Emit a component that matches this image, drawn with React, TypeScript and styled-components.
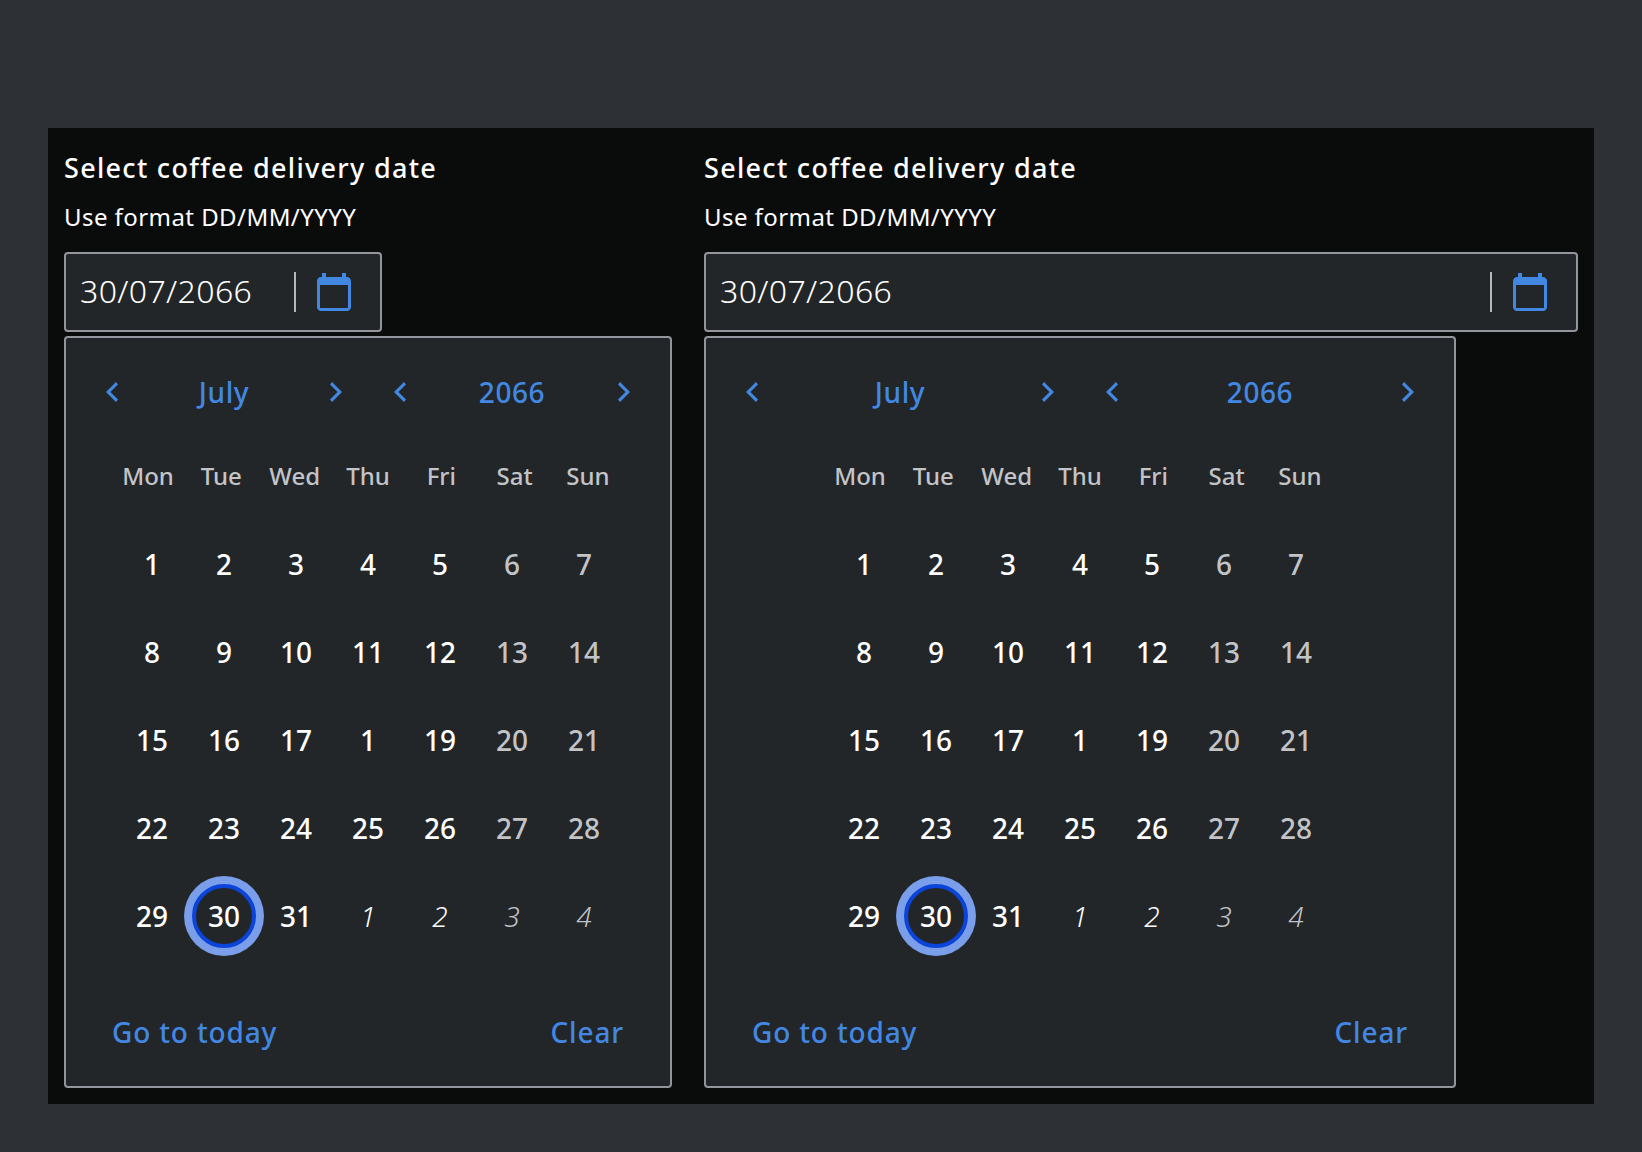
import React from "react";
import styled, { createGlobalStyle } from "styled-components";

const Global = createGlobalStyle`
  html, body { margin: 0; padding: 0; background: #2d3035; }
  body { font-family: "Noto Sans", "Open Sans", sans-serif; color: #fff; }
  * { box-sizing: border-box; }
`;

const Page = styled.div`
  width: 1642px;
  height: 1152px;
  padding: 128px 48px 48px;
  overflow: hidden;
  background: #2d3035;
`;
const Canvas = styled.div`
  display: flex;
  gap: 32px;
  width: 1546px;
  height: 976px;
  padding: 16px;
  background: #0a0c0c;
`;
const Column = styled.div<{ $wide?: boolean }>`
  display: flex;
  flex-direction: column;
  align-items: flex-start;
  ${(p) => (p.$wide ? "flex: 1 1 0; min-width: 0;" : "flex: 0 0 608px;")}
`;
const Title = styled.div`
  font-size: 27px;
  font-weight: 500;
  line-height: 48px;
  letter-spacing: 1.3px;
  white-space: nowrap;
`;
const Hint = styled.div`
  margin-top: 8px;
  font-size: 24px;
  line-height: 34px;
  margin-bottom: 2px;
  letter-spacing: 0.44px;
  white-space: nowrap;
`;
const Field = styled.div<{ $wide?: boolean }>`
  display: flex;
  align-items: center;
  width: ${(p) => (p.$wide ? "100%" : "318px")};
  height: 80px;
  margin-top: 16px;
  padding: 0 29px 0 14px;
  border: 2px solid #92969c;
  border-radius: 4px;
  background: #222629;
`;
const DateText = styled.div`
  flex: 1;
  font-size: 32px;
  font-weight: 300;
  line-height: 38px;
  margin-bottom: 2px;
  letter-spacing: 0.38px;
`;
const Divider = styled.div`
  width: 2px;
  height: 40px;
  margin-right: 21px;
  background: #b4b7bb;
`;
const Panel = styled.div<{ $wide?: boolean }>`
  width: ${(p) => (p.$wide ? "752px" : "608px")};
  height: 752px;
  margin-top: 4px;
  padding: 30px;
  border: 2px solid #92969c;
  border-radius: 4px;
  background: #222629;
`;
const Header = styled.div`
  display: flex;
  gap: 32px;
  height: 48px;
`;
const Stepper = styled.div`
  flex: 1 1 0;
  display: flex;
  align-items: center;
`;
const Arrow = styled.div`
  flex: 0 0 32px;
  display: flex;
  align-items: center;
  justify-content: center;
  color: #4288e2;
`;
const StepLabel = styled.div`
  flex: 1;
  text-align: center;
  font-size: 28px;
  font-weight: 500;
  line-height: 46px;
  letter-spacing: 0.6px;
  color: #4288e2;
`;
const WeekRow = styled.div`
  display: grid;
  grid-template-columns: repeat(7, 73.33px);
  justify-content: center;
  height: 88px;
  margin-top: 16px;
  align-items: center;
`;
const WeekDay = styled.div`
  text-align: center;
  font-size: 24px;
  font-weight: 500;
  line-height: 36px;
  color: #c2c4c7;
`;
const DayGrid = styled.div`
  display: grid;
  grid-template-columns: repeat(7, 72px);
  grid-auto-rows: 88px;
  justify-content: center;
`;
const Day = styled.div<{ $muted?: boolean; $outside?: boolean }>`
  display: flex;
  align-items: center;
  justify-content: center;
  font-size: 28px;
  font-weight: ${(p) => (p.$outside ? 300 : 500)};
  color: ${(p) => (p.$muted ? "#c2c4c7" : "#fff")};
  font-style: ${(p) => (p.$outside ? "italic" : "normal")};
`;
const Selected = styled.div`
  display: flex;
  align-items: center;
  justify-content: center;
  flex: none;
  width: 64px;
  height: 64px;
  border-radius: 50%;
  border: 4px solid #0a44d8;
  box-shadow: 0 0 0 8px #7a9eea;
  background: #222629;
`;
const Footer = styled.div`
  display: flex;
  justify-content: space-between;
  height: 48px;
  margin-top: 48px;
  padding: 0 16px;
`;
const Action = styled.div`
  font-size: 28px;
  font-weight: 500;
  line-height: 48px;
  letter-spacing: 0.85px;
  color: #4288e2;
`;

const CalendarIcon = () => (
  <svg width="34" height="38" viewBox="0 0 34 38" fill="#4288e2" aria-hidden>
    <path
      fillRule="evenodd"
      d="M5 0h4v4h16V0h4v4h1c2.200 0 4 1.800 4 4v26c0 2.200-1.800 4-4 4H4c-2.200 0-4-1.800-4-4V8c0-2.200 1.800-4 4-4h1zM3 12v23h28V12z"
    />
  </svg>
);

const Chevron = ({ right }: { right?: boolean }) => (
  <svg width="14" height="22" viewBox="0 0 14 22" fill="currentColor" aria-hidden>
    <path
      d={
        right
          ? "M1 3.400L3 1l10 10L3 21l-2-2.400L8.600 11z"
          : "M13 3.400L11 1 1 11l10 10 2-2.400L5.400 11z"
      }
    />
  </svg>
);

const weekDays = ["Mon", "Tue", "Wed", "Thu", "Fri", "Sat", "Sun"];
const days = [
  "1", "2", "3", "4", "5", "6", "7",
  "8", "9", "10", "11", "12", "13", "14",
  "15", "16", "17", "1", "19", "20", "21",
  "22", "23", "24", "25", "26", "27", "28",
  "29", "30", "31", "1", "2", "3", "4",
];

const Step = ({ label }: { label: string }) => (
  <Stepper>
    <Arrow><Chevron /></Arrow>
    <StepLabel>{label}</StepLabel>
    <Arrow><Chevron right /></Arrow>
  </Stepper>
);

const DatePicker = ({ wide }: { wide?: boolean }) => (
  <Column $wide={wide}>
    <Title>Select coffee delivery date</Title>
    <Hint>Use format DD/MM/YYYY</Hint>
    <Field $wide={wide}>
      <DateText>30/07/2066</DateText>
      <Divider />
      <CalendarIcon />
    </Field>
    <Panel $wide={wide}>
      <Header>
        <Step label="July" />
        <Step label="2066" />
      </Header>
      <WeekRow>
        {weekDays.map((d) => <WeekDay key={d}>{d}</WeekDay>)}
      </WeekRow>
      <DayGrid>
        {days.map((d, i) => {
          const col = i % 7;
          const outside = i >= 31;
          const muted = col >= 5;
          return (
            <Day key={i} $muted={muted} $outside={outside}>
              {i === 29 ? <Selected>{d}</Selected> : d}
            </Day>
          );
        })}
      </DayGrid>
      <Footer>
        <Action>Go to today</Action>
        <Action>Clear</Action>
      </Footer>
    </Panel>
  </Column>
);

export default function App() {
  return (
    <Page>
      <Global />
      <Canvas>
        <DatePicker />
        <DatePicker wide />
      </Canvas>
    </Page>
  );
}
